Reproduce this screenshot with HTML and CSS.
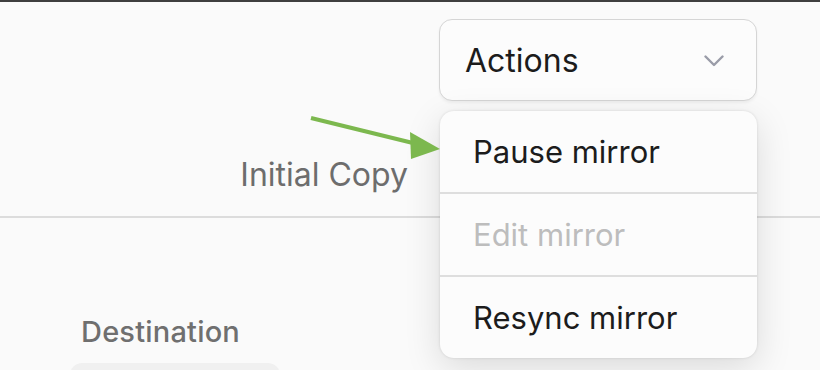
FILE: index.html
```html
<!DOCTYPE html>
<html lang="en">
<head>
    <meta charset="UTF-8">
    <meta name="viewport" content="width=device-width, initial-scale=1.0">
    <title>Mirror Actions</title>
    <link rel="stylesheet" href="styles.css">
</head>
<body>
    <div class="topbar"></div>

    <header class="mirror-head">
        <div class="toolbar">
            <div class="actions">
                <button class="actions-btn">
                    <span>Actions</span>
                    <svg class="chevron" width="20" height="12" viewBox="0 0 20 12">
                        <path d="M1.5 1.5 L10 10 L18.5 1.5" fill="none" stroke="#9a9ca8" stroke-width="2.4" stroke-linecap="round" stroke-linejoin="round"/>
                    </svg>
                </button>

                <!-- open dropdown -->
                <ul class="menu">
                    <li class="menu-item">Pause mirror</li>
                    <li class="menu-item disabled">Edit mirror</li>
                    <li class="menu-item">Resync mirror</li>
                </ul>
            </div>
        </div>
        <div class="columns">
            <span class="col-label">Initial Copy</span>
        </div>
    </header>

    <section class="details">
        <h3>Destination</h3>
        <div class="field"></div>
    </section>

    <!-- annotation arrow pointing at the first item -->
    <svg class="callout" width="140" height="50" viewBox="0 0 140 50">
        <line x1="2" y1="5" x2="108" y2="31" stroke="#7cb84e" stroke-width="4"/>
        <polygon points="131,36 101,19 102,46" fill="#7cb84e"/>
    </svg>
</body>
</html>
```

FILE: styles.css
```css
body {
    margin: 0;
    background-color: #fafafa;
    font-family: Inter, "Noto Sans", sans-serif;
    color: #1c1c1c;
    overflow: hidden;
}
.topbar {
    height: 2px;
    background-color: #3f3f3f;
}
.mirror-head {
    border-bottom: 2px solid #dcdcdc;
}
.toolbar {
    display: flex;
    justify-content: flex-end;
    padding: 17px 63px 0 0;
}
.actions {
    position: relative;
}
.actions-btn {
    display: flex;
    align-items: center;
    justify-content: space-between;
    width: 318px;
    height: 82px;
    padding: 0 32px 0 25px;
    background-color: #fcfcfc;
    border: 1.5px solid #d5d5d5;
    border-radius: 13px;
    box-shadow: 0 2px 3px rgba(0, 0, 0, 0.05);
    font-family: inherit;
    font-size: 32px;
    color: #1c1c1c;
    cursor: pointer;
}
.chevron {
    margin-top: 2px;
}
.menu {
    position: absolute;
    top: 92px;
    left: 1px;
    width: 317px;
    margin: 0;
    padding: 0;
    list-style: none;
    background-color: #fcfcfc;
    border-radius: 14px;
    box-shadow: 0 0 3px rgba(0, 0, 0, 0.12), 0 10px 36px rgba(0, 0, 0, 0.13);
    overflow: hidden;
    z-index: 2;
}
.menu-item {
    height: 81px;
    display: flex;
    align-items: center;
    padding-left: 33px;
    font-size: 31px;
    color: #1c1c1c;
}
.menu-item + .menu-item {
    border-top: 2px solid #dedede;
}
.menu-item.disabled {
    color: #bdbdbd;
}
.columns {
    display: flex;
    justify-content: flex-end;
    align-items: flex-end;
    height: 115px;
    padding: 0 412px 22px 0;
    box-sizing: border-box;
}
.col-label {
    font-size: 32px;
    color: #6d6d6d;
}
.details {
    padding: 96px 0 0 81px;
}
.details h3 {
    margin: 0;
    font-size: 29px;
    font-weight: 500;
    letter-spacing: 0.2px;
    color: #6f6f6f;
}
.field {
    width: 210px;
    height: 40px;
    margin: 14px 0 0 -11px;
    background-color: #f0f0f0;
    border-radius: 12px;
}
.callout {
    position: absolute;
    left: 309px;
    top: 113px;
    z-index: 3;
}
```
